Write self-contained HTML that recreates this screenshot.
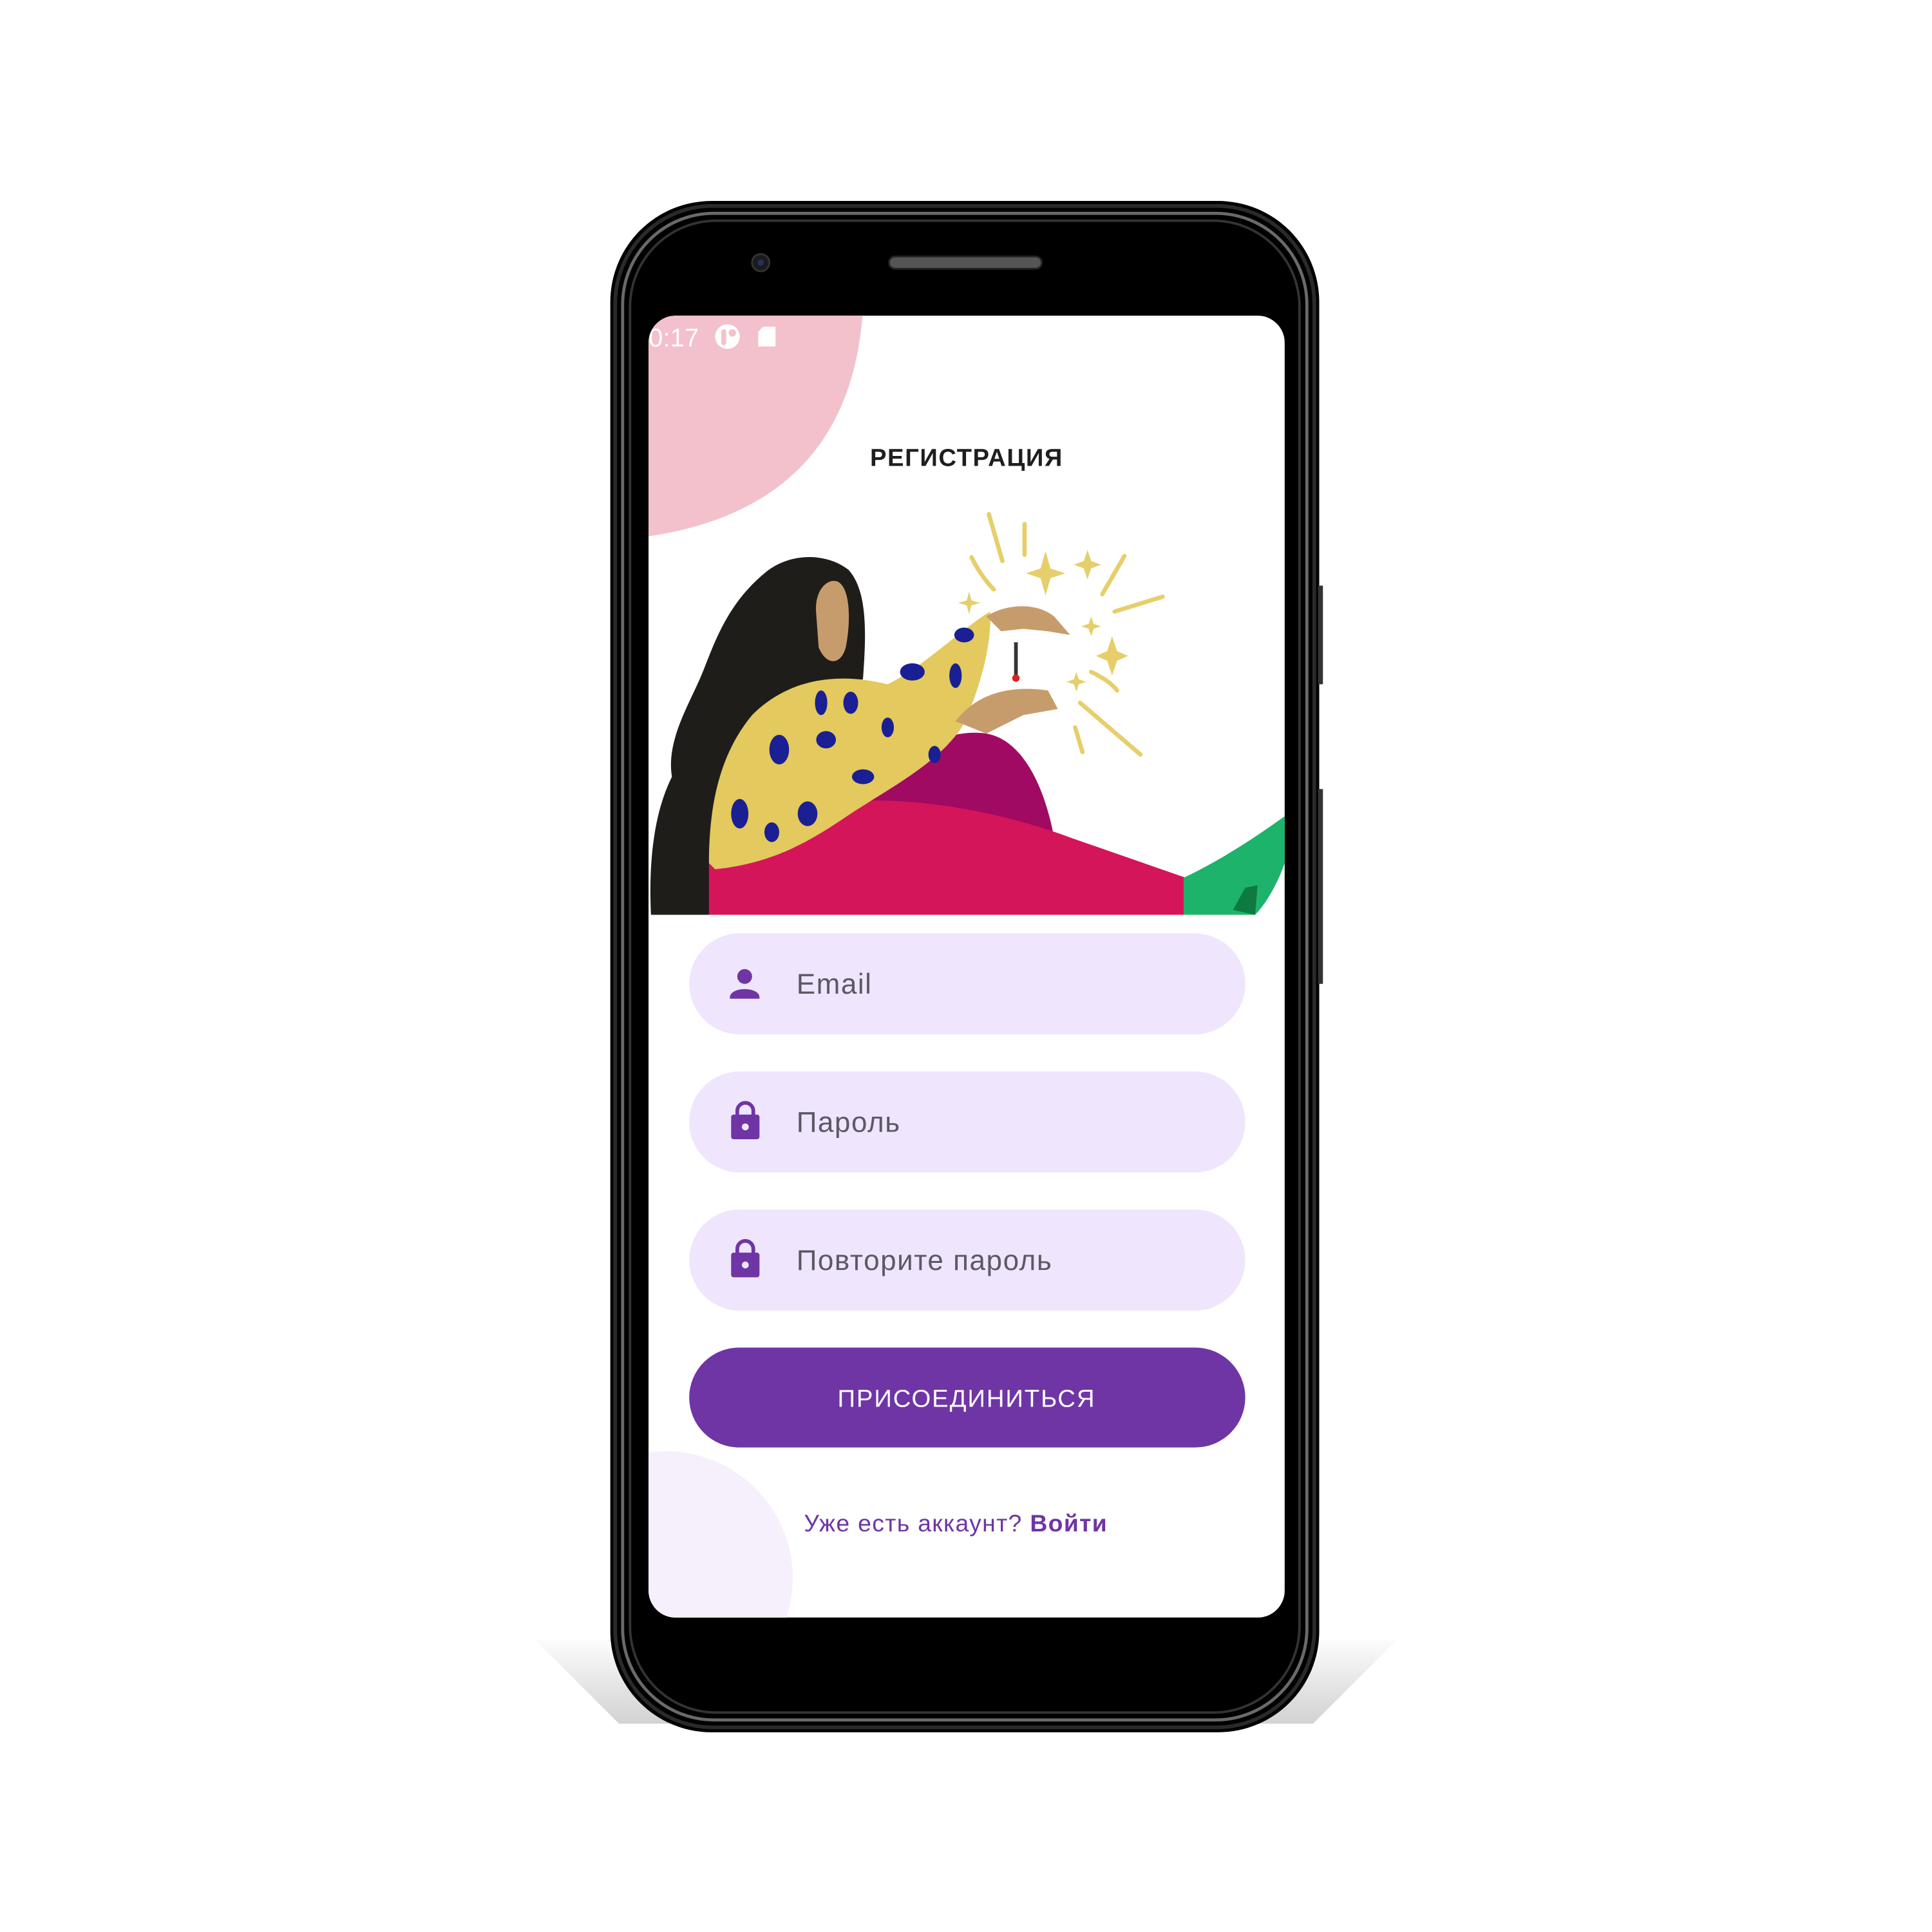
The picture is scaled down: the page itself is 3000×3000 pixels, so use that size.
<!DOCTYPE html>
<html><head><meta charset="utf-8">
<style>
html,body{margin:0;padding:0;background:#fff;width:3000px;height:3000px;overflow:hidden}
svg{display:block}
text{font-family:"Liberation Sans","DejaVu Sans",sans-serif}
</style></head>
<body>
<svg width="3000" height="3000" viewBox="0 0 1567 1567" xmlns="http://www.w3.org/2000/svg">
<defs>
  <linearGradient id="sh" x1="0" y1="0" x2="0" y2="1">
    <stop offset="0" stop-color="#fcfcfc"/><stop offset="1" stop-color="#d2d2d2"/>
  </linearGradient>
  <clipPath id="scr"><rect x="526" y="256" width="516" height="1056" rx="22"/></clipPath>
</defs>
<polygon points="434,1330 1133,1330 1065,1398 502,1398" fill="url(#sh)"/>
<rect x="495" y="163" width="575" height="1242" rx="82" fill="#000"/>
<rect x="499" y="167" width="567" height="1234" rx="79" fill="none" stroke="#2a2a2a" stroke-width="3"/>
<rect x="505" y="173" width="555" height="1222" rx="74" fill="none" stroke="#6a6a6a" stroke-width="2.5"/>
<rect x="511" y="179" width="543" height="1210" rx="70" fill="none" stroke="#333" stroke-width="2"/>
<rect x="1069" y="475" width="4" height="80" fill="#333"/>
<rect x="1069" y="640" width="4" height="158" fill="#333"/>
<circle cx="617" cy="213" r="7" fill="#1a1a1f" stroke="#333" stroke-width="1.5"/>
<circle cx="617" cy="213" r="2.5" fill="#263059"/>
<rect x="721" y="208" width="124" height="10" rx="5" fill="#555" stroke="#222" stroke-width="1.5"/>
<g clip-path="url(#scr)">
<rect x="526" y="256" width="516" height="1056" fill="#fff"/>
<path d="M520,250 L700,250 C695,330 660,415 526,435 L520,435 Z" fill="#f2c1cc"/>
<circle cx="540" cy="1280" r="103" fill="#f6f0fd"/>
<text x="526" y="281" font-size="21" fill="#fff">0:17</text>
<circle cx="590" cy="273" r="10" fill="#fff"/>
<rect x="585" y="267" width="4" height="13" rx="2" fill="#f2c1cc"/>
<circle cx="594" cy="270" r="3" fill="#f2c1cc"/>
<path d="M619,265 H629 V281 H615 V269 Z" fill="#fff"/>
<g>
  <g stroke="#e6cf6a" stroke-width="3.5" stroke-linecap="round" fill="none">
    <line x1="802" y1="417" x2="813" y2="455"/>
    <line x1="831" y1="425" x2="831" y2="450"/>
    <path d="M788,452 Q796,468 806,478"/>
    <line x1="912" y1="451" x2="894" y2="482"/>
    <line x1="943" y1="484" x2="904" y2="496"/>
    <path d="M885,545 Q900,552 906,560"/>
    <line x1="876" y1="570" x2="925" y2="612"/>
    <line x1="872" y1="590" x2="878" y2="610"/>
  </g>
  <g fill="#e6cf6a">
    <path d="M848,447 L852,461 L864,465 L852,469 L848,483 L844,469 L832,465 L844,461 Z"/>
    <path d="M882,446 L885,455 L893,458 L885,461 L882,470 L879,461 L871,458 L879,455 Z"/>
    <path d="M902,516 L906,528 L915,532 L906,536 L902,548 L898,536 L889,532 L898,528 Z"/>
    <path d="M786,480 L788,487 L795,489 L788,491 L786,498 L784,491 L777,489 L784,487 Z"/>
    <path d="M873,545 L875,551 L881,553 L875,555 L873,561 L871,555 L865,553 L871,551 Z"/>
    <path d="M885,500 L887,506 L893,508 L887,510 L885,516 L883,510 L877,508 L883,506 Z"/>
  </g>
  <path d="M528,742 C526,700 530,660 545,630 C540,600 560,570 570,545 C580,520 590,490 620,465 C640,448 670,448 688,462 C705,480 702,520 700,550 C690,580 650,600 620,640 C600,680 590,710 585,742 Z" fill="#1e1d1a"/>
  <path d="M662,498 C660,478 672,468 680,472 C690,478 690,505 686,525 C682,540 670,540 664,525 Z" fill="#c79c6c"/>
  <path d="M680,660 C720,610 770,590 800,595 C830,600 848,640 855,680 L700,690 Z" fill="#a00a62"/>
  <path d="M575,742 L575,700 C580,670 620,655 680,650 C760,645 830,665 870,680 L962,712 L962,742 Z" fill="#d4155a"/>
  <path d="M960,712 C985,700 1010,685 1042,662 L1042,700 C1035,720 1025,735 1018,742 L960,742 Z" fill="#1db36a"/>
  <path d="M1000,738 L1010,720 L1020,718 L1018,742 Z" fill="#0e7a40"/>
  <path d="M575,700 C575,650 585,610 610,580 C640,550 680,545 720,555 C750,540 780,510 803,496 C805,520 795,560 780,590 C760,620 720,640 690,660 C660,680 630,700 580,705 Z" fill="#e3c95e"/>
  <g fill="#1a1f94">
    <ellipse cx="632" cy="608" rx="8" ry="12"/>
    <ellipse cx="670" cy="600" rx="8" ry="7"/>
    <ellipse cx="700" cy="630" rx="9" ry="6"/>
    <ellipse cx="666" cy="570" rx="5" ry="10"/>
    <ellipse cx="690" cy="570" rx="6" ry="9"/>
    <ellipse cx="740" cy="545" rx="10" ry="7"/>
    <ellipse cx="775" cy="548" rx="5" ry="10"/>
    <ellipse cx="782" cy="515" rx="8" ry="6"/>
    <ellipse cx="600" cy="660" rx="7" ry="12"/>
    <ellipse cx="626" cy="675" rx="6" ry="8"/>
    <ellipse cx="655" cy="660" rx="8" ry="10"/>
    <ellipse cx="720" cy="590" rx="5" ry="8"/>
    <ellipse cx="758" cy="612" rx="5" ry="7"/>
  </g>
  <path d="M800,500 C815,490 840,488 855,500 L868,515 L850,512 L830,510 L812,512 Z" fill="#c79c6c"/>
  <path d="M775,585 C790,565 815,555 850,560 L858,575 L830,580 L800,595 Z" fill="#c79c6c"/>
  <line x1="824" y1="512" x2="824" y2="552" stroke="#333" stroke-width="3"/>
  <circle cx="824" cy="516" r="5" fill="#fff"/>
  <circle cx="824" cy="550" r="3" fill="#e02020"/>
</g>
<text x="784" y="378" font-size="20" font-weight="bold" fill="#1e1e1e" text-anchor="middle" letter-spacing="0.8">РЕГИСТРАЦИЯ</text>
<rect x="559" y="757" width="451" height="82" rx="41" fill="#efe5fd"/>
<rect x="559" y="869" width="451" height="82" rx="41" fill="#efe5fd"/>
<rect x="559" y="981" width="451" height="82" rx="41" fill="#efe5fd"/>
<rect x="559" y="1093" width="451" height="81" rx="40.5" fill="#6f35a5"/>
<circle cx="604" cy="792" r="6" fill="#6f35a5"/>
<path d="M592,809 C592,800 616,800 616,809 L616,810 L592,810 Z" fill="#6f35a5"/>
<g fill="none" stroke="#6f35a5" stroke-width="3"><path d="M598,905 V901 A6.5,6.5 0 0 1 611,901 V905"/><path d="M598,1017 V1013 A6.5,6.5 0 0 1 611,1013 V1017"/></g>
<rect x="593" y="904" width="23" height="20" rx="2" fill="#6f35a5"/>
<rect x="593" y="1016" width="23" height="20" rx="2" fill="#6f35a5"/>
<circle cx="604.5" cy="914" r="2.8" fill="#efe5fd"/>
<circle cx="604.5" cy="1026" r="2.8" fill="#efe5fd"/>
<g font-size="23" fill="#5d5864" letter-spacing="0.8">
<text x="646" y="806">Email</text>
<text x="646" y="918">Пароль</text>
<text x="646" y="1030">Повторите пароль</text>
</g>
<text x="784" y="1141" font-size="20" fill="#fff" text-anchor="middle" letter-spacing="1">ПРИСОЕДИНИТЬСЯ</text>
<text x="652" y="1242" font-size="19.5" fill="#6f35a5" letter-spacing="0.7">Уже есть аккаунт? <tspan font-weight="bold">Войти</tspan></text>
</g>
</svg>
</body></html>
